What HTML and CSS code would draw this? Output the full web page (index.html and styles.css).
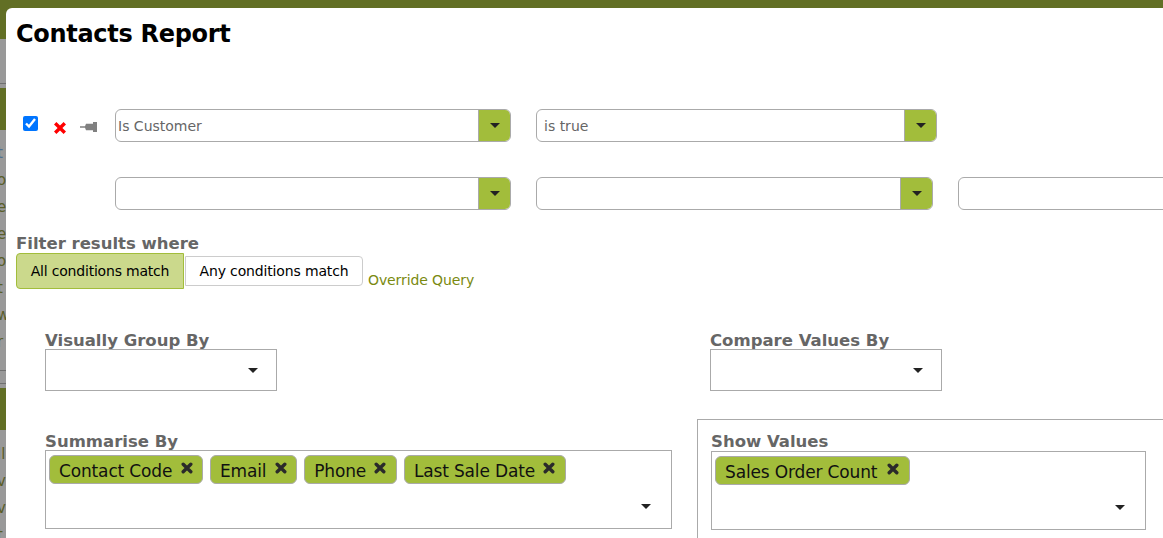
FILE: index.html
```html
<!DOCTYPE html>
<html lang="en">
<head>
<meta charset="utf-8">
<title>Contacts Report</title>
<link rel="stylesheet" href="styles.css">
</head>
<body>
<div class="backdrop">
  <div class="bg-bar bg-top"></div>
  <div class="bg-gap g1"><div class="rule"></div></div>
  <div class="bg-bar bg-mid"></div>
  <div class="bg-gap g2">
    <div class="bg-text"><span class="blue">t</span><span>o</span><span>e</span><span>e</span><span>o</span><span>t</span><span>w</span><span>r</span></div>
    <div class="rule r1"></div>
    <div class="rule r2"></div>
  </div>
  <div class="bg-bar bg-low"></div>
  <div class="bg-gap g3"><div class="bg-text"><span>ll</span><span>v</span><span>v</span><span>t</span></div></div>
</div>
<main class="dialog">
  <h1 class="title">Contacts Report</h1>
  <div class="cond cond-first">
    <input class="check" type="checkbox" checked>
    <svg class="del" viewBox="1 1 10 10" width="12" height="12"><path d="M1 3 3 1 6 4 9 1 11 3 8 6 11 9 9 11 6 8 3 11 1 9 4 6Z" fill="#f00"/></svg>
    <svg class="pin" viewBox="0 0 18 12" width="18" height="12"><path d="M0 5.300H5L6 2.800H13V1H17V11H13V9.200H6L5 6.700H0Z" fill="#808080"/></svg>
    <div class="combo w396"><span class="value">Is Customer</span><span class="btn"><i class="caret"></i></span></div>
    <div class="combo w401 gap25"><span class="value v2">is true</span><span class="btn"><i class="caret"></i></span></div>
  </div>
  <div class="cond cond-second">
    <div class="combo w396"><span class="value"></span><span class="btn"><i class="caret"></i></span></div>
    <div class="combo w397 gap25"><span class="value"></span><span class="btn"><i class="caret"></i></span></div>
    <div class="combo-plain"></div>
  </div>
  <div class="filter">
    <div class="label">Filter results where</div>
    <div class="match">
      <button class="seg seg-on">All conditions match</button>
      <button class="seg">Any conditions match</button>
      <a class="override" href="#">Override Query</a>
    </div>
  </div>
  <div class="group-row">
    <div class="field">
      <div class="label">Visually Group By</div>
      <div class="select"><i class="caret"></i></div>
    </div>
    <div class="field field-right">
      <div class="label">Compare Values By</div>
      <div class="select"><i class="caret"></i></div>
    </div>
  </div>
  <div class="sum-row">
    <div class="sum-left">
      <div class="label">Summarise By</div>
      <div class="multi m-left">
        <span class="tag">Contact Code <svg class="x" viewBox="0 0 12 12" width="12" height="12"><path d="M2.200 2.200 9.800 9.800M9.800 2.200 2.200 9.800"/></svg></span>
        <span class="tag">Email <svg class="x" viewBox="0 0 12 12" width="12" height="12"><path d="M2.200 2.200 9.800 9.800M9.800 2.200 2.200 9.800"/></svg></span>
        <span class="tag">Phone <svg class="x" viewBox="0 0 12 12" width="12" height="12"><path d="M2.200 2.200 9.800 9.800M9.800 2.200 2.200 9.800"/></svg></span>
        <span class="tag">Last Sale Date <svg class="x" viewBox="0 0 12 12" width="12" height="12"><path d="M2.200 2.200 9.800 9.800M9.800 2.200 2.200 9.800"/></svg></span>
        <i class="caret"></i>
      </div>
    </div>
    <div class="sum-right">
      <div class="label">Show Values</div>
      <div class="multi m-right">
        <span class="tag">Sales Order Count <svg class="x" viewBox="0 0 12 12" width="12" height="12"><path d="M2.200 2.200 9.800 9.800M9.800 2.200 2.200 9.800"/></svg></span>
        <i class="caret"></i>
      </div>
    </div>
  </div>
</main>
</body>
</html>
```
FILE: styles.css
```css
* { box-sizing: border-box; }
html, body { margin: 0; height: 100%; overflow: hidden; }
body { font-family: "DejaVu Sans", Verdana, sans-serif; background: #999; display: flex; width: 1163px; height: 538px; }
.backdrop { width: 6px; flex: none; display: flex; flex-direction: column; overflow: hidden; }
.bg-bar { background: #626f25; flex: none; }
.bg-top { height: 39px; }
.bg-mid { height: 42px; }
.bg-low { height: 42px; }
.bg-gap { flex: none; color: #5a5e2a; font-size: 15px; line-height: 27px; white-space: nowrap; }
.bg-text { margin-left: -3px; }
.bg-text span { display: block; }
.bg-text .blue { color: #4f6f90; }
.rule { height: 1px; background: #707070; }
.g1 { height: 49px; padding-top: 44px; }
.g2 { height: 258px; padding-top: 10px; }
.r1 { margin-top: 14px; }
.r2 { margin-top: 12px; }
.g3 { flex: 1; padding-top: 11px; }
.dialog { flex: 1; background: #fff; margin-top: 8px; border-top-left-radius: 6px; position: relative; padding: 0 0 0 10px; min-width: 0; }
.dialog::before { content: ""; position: absolute; z-index: -1; left: 0; right: 0; top: -8px; height: 16px; background: #626f25; }
.title { margin: 10px 0 0; font-size: 24px; line-height: 32px; font-weight: 700; color: #000; letter-spacing: -0.3px; }
.cond { display: flex; align-items: flex-start; height: 33px; }
.cond-first { margin-top: 59px; }
.cond-second { margin-top: 35px; padding-left: 99px; }
.check { width: 15px; height: 15px; margin: 7px 0 0 7px; accent-color: #0075ff; flex: none; }
.del { margin: 13px 0 0 16px; flex: none; }
.pin { margin: 12px 17px 0 14px; flex: none; }
.combo { height: 33px; border: 1px solid #aaa; border-radius: 6px; display: flex; flex: none; overflow: hidden; background: #fff; }
.w396 { width: 396px; }
.w401 { width: 401px; }
.w397 { width: 397px; }
.gap25 { margin-left: 25px; }
.value { flex: 1; font-size: 14px; line-height: 31px; padding-top: 1px; color: #666; padding-left: 2px; }
.v2 { padding-left: 7px; }
.btn { width: 32px; background: #a2bd3b; border-left: 1px solid #aaa; display: flex; align-items: center; justify-content: center; }
.caret { display: block; width: 0; height: 0; border: 5px solid transparent; border-top: 5px solid #222; border-bottom: 0; }
.combo-plain { width: 230px; height: 33px; margin-left: 25px; flex: none; border: 1px solid #aaa; border-radius: 6px; }
.label { font-size: 16.5px; font-weight: 700; color: #666; line-height: 19px; }
.filter { margin-top: 24px; }
.match { display: flex; align-items: flex-start; height: 36px; }
.seg { font: 14px "DejaVu Sans", Verdana, sans-serif; color: #000; background: #fff; border: 1px solid #ccc; height: 30px; width: 178px; padding: 0; margin: 3px 0 0; border-radius: 0 4px 4px 0; letter-spacing: -0.15px; }
.seg-on { background: #cbd98c; border: 1px solid #a2bd3b; height: 36px; margin: 0 1px 0 0; width: 168px; padding: 0; border-radius: 4px 0 0 4px; letter-spacing: -0.2px; }
.override { align-self: flex-end; margin: 0 0 0 5px; font-size: 14px; line-height: 17px; color: #7a8a10; text-decoration: none; letter-spacing: -0.1px; }
.group-row { display: flex; margin-top: 41px; padding-left: 29px; }
.group-row .label { padding-top: 1px; margin-bottom: -1px; }
.field { width: 232px; flex: none; }
.field-right { margin-left: 433px; }
.select { width: 232px; height: 42px; border: 1px solid #aaa; display: flex; align-items: center; justify-content: flex-end; padding-right: 18px; }
.sum-row { display: flex; align-items: flex-start; }
.sum-left .label { margin-bottom: -1px; }
.sum-right .label { margin-top: -1px; }
.sum-left { width: 627px; margin: 41px 0 0 29px; flex: none; }
.sum-right { flex: 1; margin: 28px 0 0 25px; border: 1px solid #aaa; border-right: 0; padding: 13px 0 0 13px; height: 140px; }
.multi { position: relative; border: 1px solid #aaa; height: 79px; padding: 4px 0 0 3px; display: flex; gap: 7px; align-items: flex-start; }
.m-right { width: 435px; }
.multi > .caret { position: absolute; right: 20px; top: 53px; }
.tag { font-size: 17px; line-height: 30px; height: 29px; color: #111; background: #a2bd3b; border: 1px solid #aaa; border-radius: 6px; padding: 0 9.5px 0 9px; white-space: nowrap; flex: none; letter-spacing: -0.15px; }
.x { margin-left: 3px; vertical-align: 3px; }
.m-right .x { margin-left: 4.5px; }
.x path { fill: none; stroke: #2a2a2a; stroke-width: 3.400; stroke-linecap: round; }
```
